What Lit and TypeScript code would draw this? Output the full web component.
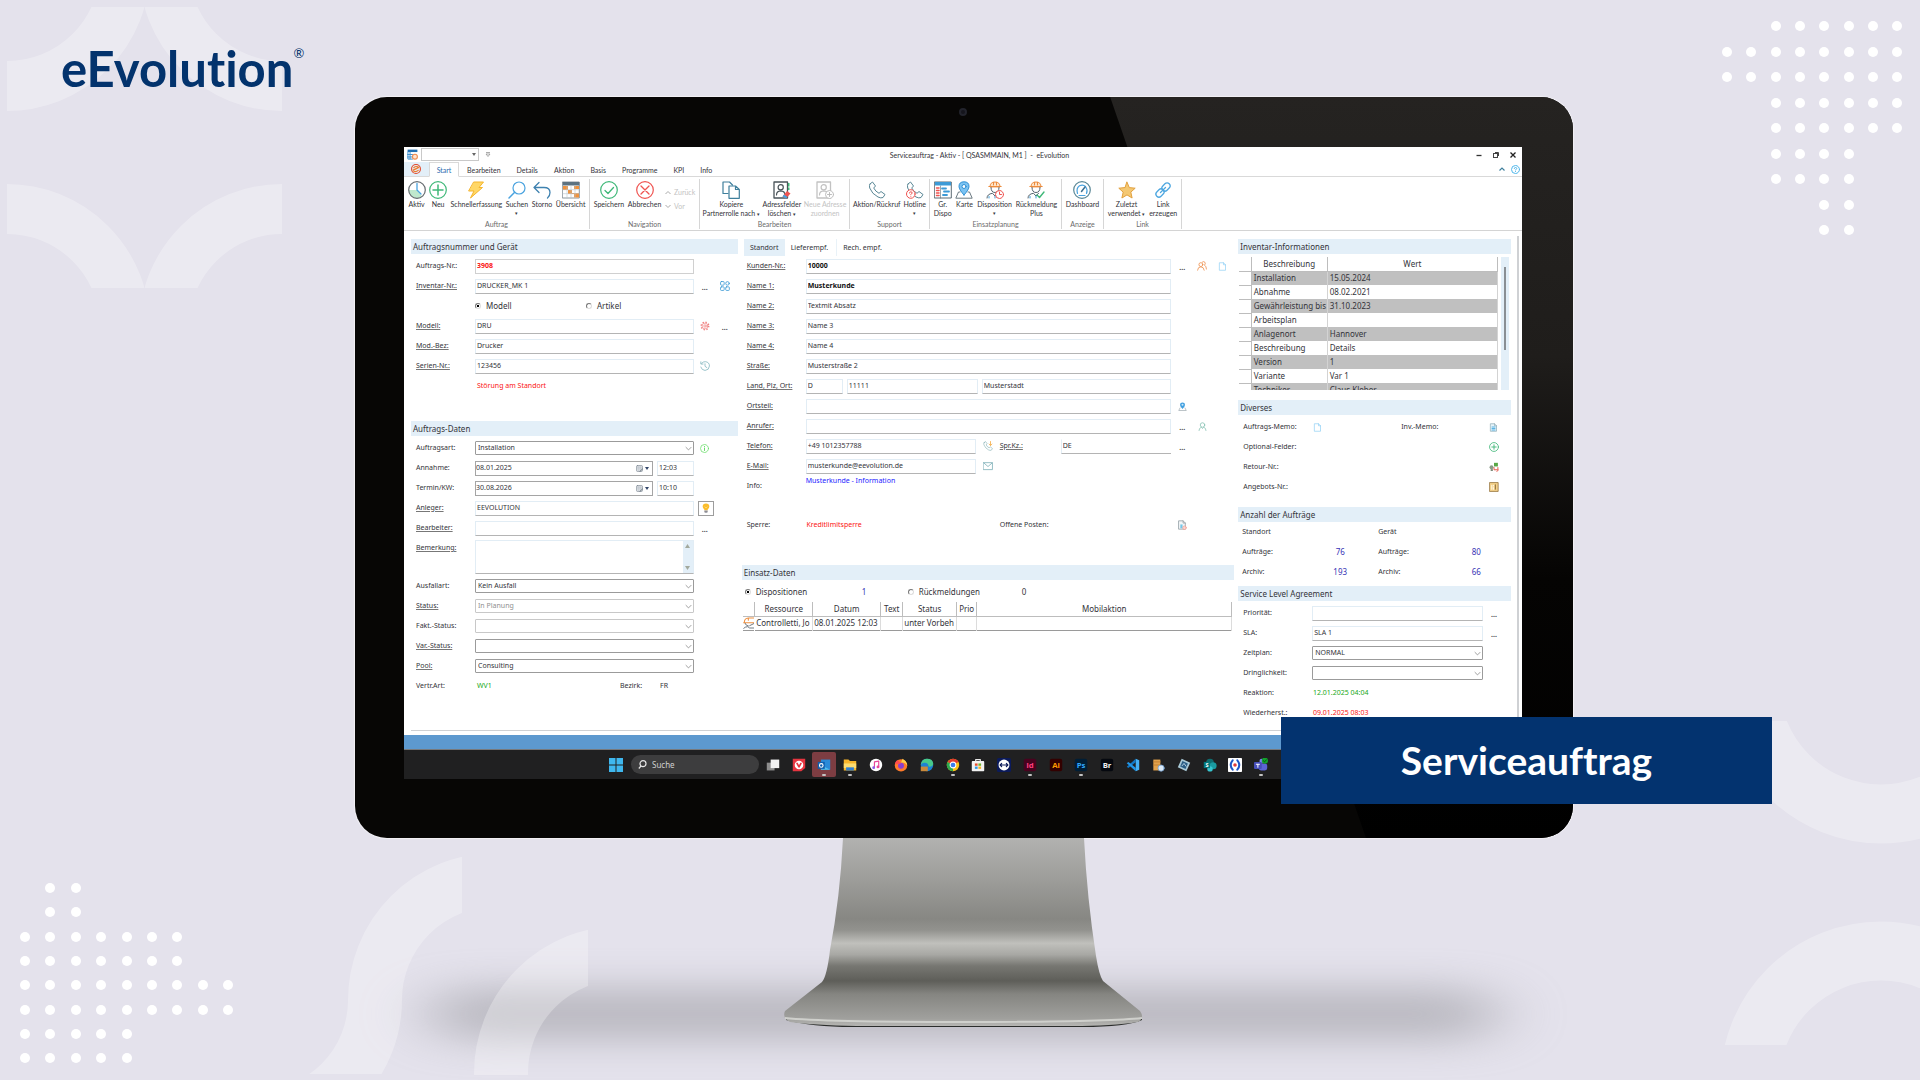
import { LitElement, html, svg, css, nothing, TemplateResult } from "lit";
import { customElement } from "lit/decorators.js";
import { classMap } from "lit/directives/class-map.js";

/* ---------- icon artwork ---------- */

const icon = (size: number, body: unknown, cls = "") => html`
  <svg class="ic ${cls}" width=${size} height=${size} viewBox="0 0 18 18" fill="none"
    stroke-linecap="round" stroke-linejoin="round" aria-hidden="true">${body}</svg>`;

const phone = (c: string) => svg`<path d="M2 3 L4.500 1 L7.500 5 L5.700 7 Q7.500 10.500 11 12.300 L13 10.500 L17 13.500 L15 16.500 Q13 17.500 10 16 Q4 13 1.700 7 Q1 4.500 2 3Z" stroke=${c}/>`;

const worker = svg`
  <path d="M4 5.500 Q4 1 9 1 Q14 1 14 5.500 Z" fill="#fde3c8" stroke="#ec8b3c"/>
  <path d="M2.800 5.500 H15.200 M7.500 1.300 V4 M10.500 1.300 V4" stroke="#ec8b3c"/>
  <path d="M5 6.500 Q5 11.500 9 11.500 Q13 11.500 13 6.500" stroke="#56646e"/>
  <path d="M1 17 Q1 13 6.500 12.300 L9 15 L11.500 12.300" stroke="#56646e"/>
  <path d="M3 17 V15.500 M9 15 V17" stroke="#3d9ad6"/>`;

const contact = (c: string) => svg`
  <rect x="1" y="1" width="13.500" height="16" stroke=${c} stroke-width="1.300"/>
  <circle cx="7.700" cy="6.300" r="2.600" stroke=${c} stroke-width="1.200"/>
  <path d="M3.500 14 Q3.500 10 7.700 9.800 Q12 10 12 14" stroke=${c} stroke-width="1.200"/>`;

const doc = (c: string, fill = "none") => svg`<path d="M3.500 1.500 H11 L15 5.500 V16.500 H3.500Z M11 1.500 V5.500 H15" stroke=${c} fill=${fill} stroke-width="1.400"/>`;

const I: Record<string, unknown> = {
  aktiv: svg`<path d="M1 9 L9 9 L14 15.500 Q9 19 4 15.500 Q1 13 1 9Z" fill="#bfe8cd"/><circle cx="9" cy="9" r="8.300" stroke="#666c70" stroke-width="1.200"/><path d="M9 2.500 V9 L13 13" stroke="#4aa3df" stroke-width="1.300"/>`,
  neu: svg`<circle cx="9" cy="9" r="8.300" stroke="#3fb878" stroke-width="1.200"/><path d="M9 4 V14 M4 9 H14" stroke="#3fb878" stroke-width="1.500"/>`,
  schnell: svg`<path d="M7 1 H16.500 L12 6.500 H15.500 L3.500 17 L7 10 H2 Z" fill="#ffd766" stroke="#f5b52c"/>`,
  suchen: svg`<circle cx="11" cy="7" r="6" stroke="#4aa3df" stroke-width="1.200"/><path d="M6.700 11.300 L1 17" stroke="#4aa3df" stroke-width="1.500"/>`,
  storno: svg`<path d="M6 1.500 L1 6.500 L6 11.500 M1 6.500 H11 Q17 6.500 17 11.500 Q17 15 14.500 17" stroke="#3f82b0" stroke-width="1.300"/>`,
  ueber: svg`<rect x=".700" y="1" width="16.600" height="16" fill="#fff" stroke="#8b959c"/><rect x=".700" y="1" width="16.600" height="3.500" fill="#5c7280"/><path d="M1 5 H6 V9 H10 V12 H17 V16.500 H12 V13 H6 V9 H1Z M12 5 H17 V8 H12Z" fill="#f0923c"/><path d="M1 8.700 H17 M1 12.700 H17 M5 4.500 V17 M9 4.500 V17 M13 4.500 V17" stroke="#b9c6cd" stroke-width=".600"/>`,
  speichern: svg`<circle cx="9" cy="9" r="8.300" stroke="#3fb878" stroke-width="1.200"/><path d="M5 9.500 L8 12.500 L13.500 6.500" stroke="#3fb878" stroke-width="1.300"/>`,
  abbrechen: svg`<circle cx="9" cy="9" r="8.300" stroke="#ef5350" stroke-width="1.200"/><path d="M5 5 L13 13 M13 5 L5 13" stroke="#ef5350" stroke-width="1.300"/>`,
  kopiere: svg`<path d="M6 12.500 H1 V1 H7.500 L10.500 4" stroke="#3f7f9c" stroke-width="1.200"/><path d="M7 5 H13.500 L17.300 8.500 V17.300 H7Z M13.500 5 V8.500 H17.300" stroke="#3f7f9c" stroke-width="1.200" fill="#fff"/>`,
  adresse: svg`${contact("#4a5459")}<path d="M15 2 H16.500 V5.500 H15Z M15 6.500 H16.500 V9 H15Z" fill="#3fb878"/><path d="M9.500 15.500 L14 10 L17.500 12.500 L13 17.500Z" fill="#ef5350"/><path d="M9.500 15.500 L11 13.500 L14.500 16 L13 17.500Z" fill="#4aa3df"/>`,
  neueadr: svg`${contact("#c2c2c2")}<circle cx="13.500" cy="13.500" r="4" fill="#fff" stroke="#bdbdbd"/><path d="M13.500 11.500 V15.500 M11.500 13.500 H15.500" stroke="#bdbdbd"/>`,
  phone: phone("#5a8796"),
  hotline: svg`${phone("#5a8796")}<circle cx="4.800" cy="13" r="4.300" fill="#fff" stroke="#ef5350"/><path d="M3.500 12 Q3.500 10.800 4.800 10.800 Q6.200 10.800 6.200 12 Q6.200 12.800 4.800 13.400 M4.800 15.200 V15.300" stroke="#ef5350"/>`,
  dispo: svg`<rect x=".700" y="1" width="16.600" height="16" stroke="#5d6b74"/><rect x="1" y="1" width="16" height="3.500" fill="#3d9ad6"/><path d="M2.500 7 H5 M2.500 9.500 H5 M2.500 12 H5 M2.500 14.500 H5" stroke="#ef5350" stroke-width="1.500"/><path d="M8 7.500 H12 M10 10.500 H15 M9 14 H13" stroke="#3d9ad6" stroke-width="1.800"/><path d="M6.500 5 V17" stroke="#5d6b74" stroke-width=".600"/>`,
  karte: svg`<path d="M5 11 H3.500 L.800 17.200 H17.200 L14.500 11 H13" stroke="#6c7a82"/><path d="M9 14 Q4 8.500 4 5.500 Q4 .800 9 .800 Q14 .800 14 5.500 Q14 8.500 9 14Z" fill="#7cc3f2" stroke="#2f8fd3"/><circle cx="9" cy="5.500" r="2" fill="#fff" stroke="#2f8fd3"/>`,
  disposition: svg`${worker}<circle cx="13.500" cy="13.500" r="4" fill="#fff" stroke="#ef5350"/><path d="M13.500 11 V13.500 H15.500" stroke="#ef5350"/>`,
  rueck: svg`${worker}<path d="M10 14 L12.500 16.500 L17 11" stroke="#3fb878" stroke-width="1.400"/>`,
  dash: svg`<circle cx="9" cy="9" r="8.300" stroke="#5a8796" stroke-width="1.200"/><path d="M4.500 12.500 Q3 7 6.500 4.800 Q10 3 12.500 5.500 Q15 9 13.500 12.500 M6 14.500 H12" stroke="#4aa3df" stroke-width="1.200"/><path d="M8.500 10.500 L12 6" stroke="#3d6f90" stroke-width="1.500"/>`,
  stern: svg`<path d="M9 1.200 L11.300 6.600 L17.200 7.200 L12.800 11.100 L14.100 17 L9 13.900 L3.900 17 L5.200 11.100 L.800 7.200 L6.700 6.600Z" fill="#f4c873" stroke="#e2a13f"/>`,
  link: svg`<rect x="9" y="1.500" width="6" height="9" rx="3" transform="rotate(45 12 6)" stroke="#4ea7e0" stroke-width="1.300"/><rect x="3" y="7.500" width="6" height="9" rx="3" transform="rotate(45 6 12)" stroke="#4ea7e0" stroke-width="1.300"/><path d="M6.500 11.500 L11.500 6.500" stroke="#4ea7e0" stroke-width="1.300"/>`,
  app: svg`<rect x="1" y="1" width="16" height="4" fill="#1f6fb2"/><path d="M1.500 5 V16.500 H9 M1 9 H9 M1 13 H9 M5 5 V16" stroke="#3d8fcf" stroke-width="1.600"/><circle cx="13" cy="12.500" r="4" fill="#ffe3cf" stroke="#ee8a4c" stroke-width="1.800"/>`,
  ee: svg`<circle cx="9" cy="9" r="8" stroke="#e1492c" stroke-width="2"/><path d="M4 11 L14 6 M5 13 Q9 15 13 11.500 M5 6.500 Q8 3.500 12.500 5" stroke="#ee7a2c" stroke-width="2.200"/>`,
  grid: svg`<g stroke="#3d9ad6" stroke-width="1.500"><rect x="1" y="1" width="6.500" height="6.500" rx="1.500"/><circle cx="13.500" cy="4.300" r="3.200"/><rect x="1" y="10.500" width="6.500" height="6.500" rx="1.500"/><rect x="10.300" y="10.500" width="6.500" height="6.500" rx="1.500"/></g>`,
  gear: svg`<circle cx="9" cy="9" r="6.800" stroke="#f07f7f" stroke-width="2.400" stroke-dasharray="2.500 2.840" stroke-linecap="butt"/><circle cx="9" cy="9" r="5.200" stroke="#f07f7f" stroke-width="1.200"/><circle cx="9" cy="9" r="2.200" stroke="#f07f7f" stroke-width="1.300"/>`,
  history: svg`<path d="M3 4 Q6 1 9.500 1.200 Q17 2 17 9 Q16.500 16.500 9 17 Q3 16.500 1.500 11 M1.500 1.500 V5.500 H5.500 M9 5 V9.500 L12.500 12" stroke="#7fb4bd" stroke-width="1.400"/>`,
  info: svg`<circle cx="9" cy="9" r="8" stroke="#67dd67" stroke-width="1.500"/><path d="M9 8 V13 M9 5 V5.200" stroke="#67dd67" stroke-width="2"/>`,
  bulb: svg`<path d="M9 1 Q15 1 15 6.500 Q15 9 12 11.500 V13 H6 V11.500 Q3 9 3 6.500 Q3 1 9 1Z" fill="#fbbd2b"/><path d="M7 7 L9 9 L11 7" stroke="#fde7a8"/><path d="M6 13.500 H12 V16.500 L10 17.500 H8 L6 16.500Z" fill="#8c8c94"/>`,
  people: svg`<g stroke="#ee9150" stroke-width="1.500"><circle cx="7" cy="6.500" r="3.500"/><path d="M1 16.500 Q1.500 10.500 7 10.500 Q12 10.500 13 16.500"/><path d="M9.500 2 Q12 0 14 2 Q16 5 13.500 7.500 Q17 9.500 17 14.500"/></g>`,
  sheet: doc("#8fd0f5"),
  sheetfull: svg`${doc("#8aa9b5", "#e6f4fb")}<path d="M6 8 H12 M6 11 H12 M6 14 H12" stroke="#5ab4e4" stroke-width="2"/>`,
  pin: svg`<path d="M4 12 L1.500 17 H16.500 L14 12" stroke="#98a4aa" stroke-width="1.300"/><path d="M9 14 Q4 9 4 5.500 Q4 1 9 1 Q14 1 14 5.500 Q14 9 9 14Z" fill="#3f9fe0"/><circle cx="9" cy="5.500" r="2" fill="#cfe9fa"/>`,
  person: svg`<g stroke="#83bfb0" stroke-width="1.500"><circle cx="9" cy="6" r="4.500"/><path d="M2 17 Q2 12 6.500 10.500 L9 13 L11.500 10.500 Q16 12 16 17"/></g>`,
  call: svg`${phone("#77a9ab")}<path d="M13.500 1 V8 M11 5.500 L13.500 8 L16 5.500" stroke="#f5b252" stroke-width="1.600"/>`,
  mail: svg`<rect x="1" y="3" width="16" height="12.500" stroke="#79acb5" stroke-width="1.400"/><path d="M1.500 3.500 L9 10 L16.500 3.500" stroke="#79acb5" stroke-width="1.400"/>`,
  posten: svg`${doc("#8f9ba1", "#f3f6f8")}<path d="M6 8 H10 V15 H6Z" fill="#74c7e8"/><circle cx="13.500" cy="14" r="3.300" fill="#fbd5d0" stroke="#f19084"/>`,
  plus: svg`<circle cx="9" cy="9" r="8" stroke="#45b97c" stroke-width="1.500"/><path d="M9 5 V13 M5 9 H13" stroke="#45b97c" stroke-width="1.700"/>`,
  retour: svg`<circle cx="4.500" cy="9.500" r="3.500" fill="#8a9a86"/><rect x="9" y="1.500" width="7" height="6.500" fill="#58a846"/><path d="M3 13 H7 V16 H3Z" fill="#6c7c67"/><path d="M9 10 V14 H16 V10 M14 17 L17 14.500" stroke="#e3594b" stroke-width="1.800"/>`,
  angebot: svg`<rect x="1.500" y="1" width="15" height="16" fill="#f3d089" stroke="#9b7a45" stroke-width="1.500"/><path d="M5 6 V13 M8 6 V7 M8 10 V13" stroke="#fff6de" stroke-width="2"/><path d="M11.500 5 V13" stroke="#7b5d2d" stroke-width="1.500"/>`,
  calendar: svg`<rect x="1.500" y="1.500" width="15" height="15" rx="2" fill="#e4e6ea" stroke="#7b8590" stroke-width="1.700"/><path d="M3 6 H15 M3 10 H15 M7 3 V15 M11 3 V15" stroke="#aab3bd"/><path d="M10 16.500 L16.500 10.500" stroke="#4d5966" stroke-width="2"/>`,
  helm: svg`<path d="M2 8 Q2 2 8 1.500 H16 M8 1.500 V5 M1 8.500 H16" stroke="#ee9040" stroke-width="1.600"/><path d="M3 9.500 Q4 13 8 13.500 M10 13 L16 10 M1 17 Q3 14.500 7 14.500 L10 16.500 H16" stroke="#5b6670" stroke-width="1.300"/>`,
};

/* ---------- ribbon description ---------- */

interface Tool { i: string; t: string; t2?: string; drop?: boolean; off?: boolean; }
interface Group { name: string; width: number; tools: Tool[]; nav?: boolean; }

const GROUPS: Group[] = [
  { name: "Auftrag", width: 186, tools: [
    { i: "aktiv", t: "Aktiv" }, { i: "neu", t: "Neu" }, { i: "schnell", t: "Schnellerfassung" },
    { i: "suchen", t: "Suchen", drop: true }, { i: "storno", t: "Storno" }, { i: "ueber", t: "Übersicht" } ] },
  { name: "Navigation", width: 110, nav: true, tools: [
    { i: "speichern", t: "Speichern" }, { i: "abbrechen", t: "Abbrechen" } ] },
  { name: "Bearbeiten", width: 150, tools: [
    { i: "kopiere", t: "Kopiere", t2: "Partnerrolle nach", drop: true },
    { i: "adresse", t: "Adressfelder", t2: "löschen", drop: true },
    { i: "neueadr", t: "Neue Adresse", t2: "zuordnen", off: true } ] },
  { name: "Support", width: 80, tools: [
    { i: "phone", t: "Aktion/Rückruf" }, { i: "hotline", t: "Hotline", drop: true } ] },
  { name: "Einsatzplanung", width: 132, tools: [
    { i: "dispo", t: "Gr.", t2: "Dispo" }, { i: "karte", t: "Karte" },
    { i: "disposition", t: "Disposition", drop: true }, { i: "rueck", t: "Rückmeldung", t2: "Plus" } ] },
  { name: "Anzeige", width: 42, tools: [{ i: "dash", t: "Dashboard" }] },
  { name: "Link", width: 78, tools: [
    { i: "stern", t: "Zuletzt", t2: "verwendet", drop: true }, { i: "link", t: "Link", t2: "erzeugen" } ] },
];

const INVENTORY: [string, string][] = [
  ["Installation", "15.05.2024"], ["Abnahme", "08.02.2021"], ["Gewährleistung bis", "31.10.2023"],
  ["Arbeitsplan", ""], ["Anlagenort", "Hannover"], ["Beschreibung", "Details"],
  ["Version", "1"], ["Variante", "Var 1"], ["Techniker", "Claus Kleber"],
];

/* ---------- taskbar artwork ---------- */

const tile = (bg: string, fg: string, t: string) => svg`
  <rect x="1" y="1" width="16" height="16" rx="2.500" fill=${bg}/>
  <text x="9" y="12.700" text-anchor="middle" font-size="10" font-weight="700" font-family="Open Sans, sans-serif" fill=${fg}>${t}</text>`;

const TASKS: { n: string; g: unknown; run?: boolean; hot?: boolean }[] = [
  { n: "Taskansicht", g: svg`<rect x="1" y="6" width="10" height="10" fill="#8d8d8d"/><rect x="6" y="2" width="11" height="11" fill="#f1f1f1"/>` },
  { n: "Vivaldi", g: svg`<path d="M1 1 H17 V13 L12 17 H1Z" fill="#e63540"/><circle cx="9" cy="9" r="5.500" fill="#fff"/><path d="M6.500 7 L9 11.500 L11.500 7" stroke="#e63540" stroke-width="2.200"/>` },
  { n: "Outlook", hot: true, run: true, g: svg`<path d="M5 2 H17 V15 H5Z" fill="#2a8ad8"/><path d="M5 9 L17 15 H5Z" fill="#50c0f0"/><rect x="1" y="5" width="9" height="9" fill="#0f5fae"/><circle cx="5.500" cy="9.500" r="2.300" stroke="#fff" stroke-width="1.400"/>` },
  { n: "Explorer", run: true, g: svg`<path d="M1 2 H7 L9 4 H17 V16 H1Z" fill="#f7b52c"/><path d="M1 7 H17 V13 H1Z" fill="#fddc70"/><path d="M4 16 V12 H14 V16" fill="#2f7fd0"/>` },
  { n: "iTunes", g: svg`<circle cx="9" cy="9" r="8" fill="#fff"/><path d="M7 12.500 V5 L12.500 4 V11.500" stroke="#e8489a" stroke-width="1.500"/><circle cx="6" cy="12.500" r="1.800" fill="#8a5be8"/><circle cx="11.500" cy="11.500" r="1.800" fill="#e8489a"/>` },
  { n: "Firefox", g: svg`<circle cx="9" cy="9.500" r="8" fill="#ff7a2a"/><path d="M11 1 Q17 4 17 10 Q14 5 9 6Z" fill="#ffd04a"/><circle cx="9" cy="10" r="3.800" fill="#8b3fd0"/><path d="M1.500 8 Q2 3 5 3 L9 7Z" fill="#ff4b50"/>` },
  { n: "Edge", g: svg`<circle cx="9" cy="9" r="8" fill="#1d82d2"/><path d="M1 9 Q2 1 9 1 Q17 1 17 8 Q16 12 11 11 Q11 6 6 6 Q2 6 1 9Z" fill="#48c98a"/><rect x="1" y="11" width="9" height="6" fill="#c98a3c"/>` },
  { n: "Chrome", run: true, g: svg`<circle cx="9" cy="9" r="8" fill="#fbc116"/><path d="M9 9 L2 5 Q5 1 9 1 Q14 1 16 5Z" fill="#e33b2e"/><path d="M9 9 L9 17 Q1 16 1 9 Q1 6.500 2 5Z" fill="#2da94f"/><circle cx="9" cy="9" r="3.700" fill="#3b7ded" stroke="#fff" stroke-width="1.300"/>` },
  { n: "Store", g: svg`<path d="M6 5 V2 H12 V5" stroke="#e8e8e8" stroke-width="1.500"/><rect x="1" y="4" width="16" height="13" rx="1" fill="#f2f2f2"/><path d="M5 7 H8.500 V10 H5Z" fill="#e8502f"/><path d="M9.500 7 H13 V10 H9.500Z" fill="#6fb52c"/><path d="M5 11 H8.500 V14 H5Z" fill="#2f9be8"/><path d="M9.500 11 H13 V14 H9.500Z" fill="#f5b52c"/>` },
  { n: "TeamViewer", g: svg`<rect width="18" height="18" rx="2" fill="#0b1a5a"/><circle cx="9" cy="9" r="7" fill="#fff"/><path d="M4 9 H14 M6 7 L4 9 L6 11 M12 7 L14 9 L12 11" stroke="#0b1a5a" stroke-width="1.500"/>` },
  { n: "InDesign", run: true, g: tile("#49021f", "#ff3f7f", "Id") },
  { n: "Illustrator", g: tile("#330000", "#ff9a00", "Ai") },
  { n: "Photoshop", run: true, g: tile("#001e36", "#31a8ff", "Ps") },
  { n: "Bridge", g: tile("#05080f", "#f0f0f0", "Br") },
  { n: "VS Code", g: svg`<path d="M12.500 1 V17 L17 15 V3Z" fill="#45b1f5"/><path d="M12.500 1 V5.500 L3 13 L1 11.300Z" fill="#1277c4"/><path d="M12.500 17 V12.500 L3 5 L1 6.700Z" fill="#2196e8"/>` },
  { n: "Verwaltung", g: svg`<path d="M3 2 H12 V16 H3Z" fill="#e3a24c"/><path d="M3 5 H12 M3 9 H12" stroke="#b9762a"/><circle cx="13" cy="13" r="4" fill="#dce9f5" stroke="#6f9fd0"/>` },
  { n: "Navigator", g: svg`<path d="M6 1 L17 6 L12 17 L1 12Z" fill="#a9c9d6"/><path d="M7 4 L14 7 L11 14 L4 11Z" fill="#2a5e86"/><path d="M6.500 10 L9 7 L11.500 10.500" stroke="#d8ecf6"/>` },
  { n: "SharePoint", g: svg`<circle cx="9" cy="6" r="5" fill="#0f6c70"/><circle cx="13" cy="10" r="4.500" fill="#1a9ba1"/><circle cx="9" cy="14" r="3.500" fill="#37c6d0"/><rect x="1" y="5" width="8" height="8" fill="#03787c"/><text x="5" y="11.500" text-anchor="middle" font-size="7" font-weight="700" font-family="Open Sans, sans-serif" fill="#fff">S</text>` },
  { n: "Fernwartung", g: svg`<rect width="18" height="18" rx="1" fill="#fff"/><path d="M6 3 Q1 9 6 15 M12 3 Q17 9 12 15" stroke="#1b55c8" stroke-width="2.600"/><circle cx="9" cy="9" r="2.300" fill="#e03b3b"/>` },
  { n: "Teams", run: true, g: svg`<circle cx="10" cy="4" r="3" fill="#7b83eb"/><rect x="6" y="7" width="11" height="9" rx="3" fill="#5b63d3"/><rect x="0" y="5" width="10" height="9" rx="1" fill="#464eb8"/><path d="M3 8 H7 M5 8 V12" stroke="#fff" stroke-width="1.300"/><circle cx="14" cy="3.500" r="4" fill="#12a12c"/><path d="M12 3.500 L13.500 5 L16 2.300" stroke="#043d0d"/>` },
];

/* ---------- background dots ---------- */

const dots = (x0: number, y0: number, dx: number, dy: number, rows: [number, number][]) =>
  rows.map(([a, b], r) => Array.from({ length: b - a + 1 }, (_, k) =>
    svg`<circle cx=${Math.round(x0 + (a + k) * dx)} cy=${Math.round(y0 + r * dy)} r="5"/>`));

const ring = (cx: number, cy: number, r: number, w: number, clip: string) =>
  svg`<circle cx=${cx} cy=${cy} r=${r} stroke-width=${w} clip-path="url(#${clip})"/>`;

@customElement("app-root")
export class AppRoot extends LitElement {
  static styles = css`
    :host { display: block; font-family: "Noto Sans", "Open Sans", sans-serif; font-size: 7px; line-height: 10px; color: #333339; }
    * { box-sizing: border-box; }
    svg { display: block; }
    button, input, select, textarea { font: inherit; color: inherit; margin: 0; padding: 0; border: 0; background: none; border-radius: 0; outline: 0; }
    .scene { position: relative; overflow: hidden; min-height: 100vh; background: #e4e2ec; display: grid; grid-template-columns: 355fr 1218fr 347fr; grid-template-rows: 97px auto 1fr; }
    .decor { position: absolute; inset: 0; width: 100%; height: 100%; }
    .logo { position: relative; grid-column: 1 / -1; margin: 0; padding: 38px 0 0 61px; display: flex; font: 700 49px/60px Lato, sans-serif; font-variant-ligatures: none; color: #03336d; }
    .reg { font-size: 13px; line-height: 30px; font-weight: 400; }

    .monitor { position: relative; grid-column: 2; padding: 50px 51px 59px 49px; border-radius: 32px; background: #070605; box-shadow: 0 0 1px 1px #f2f1f6; }
    .gloss { position: absolute; inset: 0; border-radius: 32px; background: linear-gradient(#252321, #1f1d1b 35%, #050403 65%, #000); clip-path: polygon(62% 0, 100% 0, 100% 100%, 83% 100%); }
    .camera { position: absolute; top: 11px; left: 50%; width: 8px; height: 8px; margin-left: -5px; border-radius: 4px; background: #15151c; border: 2px solid #22232c; }
    .screen { position: relative; background: #fff; display: flex; flex-direction: column; }
    .stand { position: relative; grid-column: 2; justify-self: center; width: 364px; }
    .banner { position: absolute; right: -199px; bottom: 34px; width: 491px; height: 87px; margin: 0; background: #03336f; color: #fff; font: 700 39px/86px Lato, sans-serif; font-variant-ligatures: none; text-align: center; }

    .chrome { font-family: Lato, "Noto Sans", sans-serif; }
    .titlebar { display: grid; grid-template-columns: 1fr auto 1fr; align-items: center; height: 15px; padding: 0 5px 0 3px; }
    .quick { display: flex; align-items: center; gap: 3px; }
    .quickwrap { display: grid; align-items: center; }
    .quickwrap > * { grid-area: 1 / 1; }
    .quickwrap svg { justify-self: end; margin-right: 3px; }
    .quickbox { width: 58px; height: 13px; border: 1px solid #c9c9c9; }
    .title { padding-left: 35px; white-space: pre; font-size: 7px; }
    .winbtns { display: flex; justify-content: flex-end; gap: 9px; }
    .tabs { display: flex; align-items: stretch; height: 15px; border-bottom: 1px solid #d9d9d9; }
    .filetab { width: 25px; background: #e3eff8; display: grid; place-items: center; padding-right: 2px; }
    .tab { height: 15px; padding: 0 8px; }
    .tab.active { border: 1px solid #d9d9d9; border-bottom-color: #fff; background: #fff; color: #2c6cb0; width: 30px; padding: 0; }
    .tabs .right { margin-left: auto; display: flex; align-items: center; gap: 5px; padding-right: 2px; }
    .ribbon { display: flex; height: 54px; border-bottom: 1px solid #d4d4d4; }
    .group { display: grid; grid-template-rows: 1fr 9px; margin: 2px 0 1px; border-right: 1px solid #d6d6d6; text-align: center; }
    .tools { display: flex; justify-content: space-evenly; align-items: flex-start; padding-top: 2px; }
    .tool { min-width: 18px; display: grid; justify-items: center; white-space: nowrap; line-height: 9px; }
    .tool .ic { margin-bottom: 1px; }
    .tool.off, .step { color: #c3c3c3; }
    .gname { color: #6b6b6b; line-height: 9px; }
    .steps { display: grid; gap: 4px; padding-top: 6px; }
    .step { display: flex; align-items: center; gap: 3px; line-height: 10px; }
    .drop { font-size: 5px; line-height: 8px; }

    .body { display: grid; grid-template-columns: 327fr 493fr 273fr; gap: 4px; padding: 8px 11px 4px 7px; min-height: 504px; position: relative; }
    .body::after { content: ""; position: absolute; right: 3px; top: 5px; bottom: 5px; width: 2px; background: #cfd1d4; }
    .body::before { content: ""; position: absolute; left: 7px; right: 3px; bottom: 4px; height: 1px; background: #cfd1d4; }
    .colm { display: flex; flex-direction: column; min-width: 0; }
    .head { margin: 0; height: 15px; background: #e3eff8; padding-left: 2px; font-size: 8px; font-weight: 400; line-height: 15px; }
    .rows { padding: 2px 0 0 5px; }
    .mid .rows { padding-top: 0; }
    .row { display: grid; grid-template-columns: 59px 1fr 44px; align-items: center; height: 20px; }
    .mid .row { grid-template-columns: 59px 1fr 63px; }
    .sla .row { grid-template-columns: 69px 1fr 28px; padding-left: 0; }
    .tall { height: 38px; }
    .tall > label { align-self: start; padding-top: 5px; }
    .u { text-decoration: underline; text-underline-offset: 1px; text-decoration-color: #777; }
    .fields { display: flex; align-items: center; gap: 4px; min-width: 0; }
    .fields > * { min-width: 0; }
    .in { width: 100%; height: 15px; padding: 0 0 1px 1px; border: 1px solid #e2edf5; border-bottom-color: #b4b4b4; }
    .in.first { border-color: #d0d0d0; }
    .bold { font-weight: 700; color: #111; }
    .red { color: #fb1414; }
    .green { color: #18a818; }
    .blue { color: #1d1dff; }
    .navy { color: #3733b5; font-size: 8px; }
    .sel { display: grid; width: 100%; align-items: center; }
    .sel > * { grid-area: 1 / 1; }
    .sel select { width: 100%; height: 14px; appearance: none; border: 1px solid #9b9b9b; border-radius: 1px; padding: 0 2px 1px; opacity: 1; }
    .sel select:disabled { border-color: #c8c8c8; color: #8f8f8f; }
    .sel .ic { justify-self: end; margin-right: 2px; pointer-events: none; }
    .date { display: flex; align-items: center; flex: 180 1 0; height: 15px; border: 1px solid #a5a5a5; padding-right: 3px; }
    .date input { flex: 1; min-width: 0; padding-bottom: 1px; }
    .date button { display: flex; align-items: center; gap: 2px; }
    .time { flex: 35 1 0; }
    .w35 { flex: 35 1 0; } .w131 { flex: 131 1 0; } .w191 { flex: 191 1 0; }
    .w170 { flex: 0 0 170px; } .icoslot { flex: 0 0 16px; display: grid; place-items: center; }
    .lab59 { flex: 0 0 57px; }
    .open { border-right: 0; border-top-color: #fff; }
    .area { display: grid; grid-template-columns: 1fr 10px; height: 34px; border: 1px solid #e2edf5; border-bottom-color: #b4b4b4; }
    .area textarea { resize: none; width: 100%; height: 100%; min-width: 0; }
    .areabar { background: #e3eff8; display: flex; flex-direction: column; justify-content: space-between; align-items: center; padding: 3px 0; }
    .extras { display: flex; padding-left: 1px; }
    .extras > * { width: 20px; display: grid; place-items: center; }
    .dots { font-weight: 700; line-height: 8px; padding-top: 4px; }
    .extras > .boxed { border: 1px solid #9d9d9d; width: 16px; height: 15px; margin-left: 3px; }
    .radio { display: flex; align-items: center; gap: 5px; font-size: 8px; }
    .radio input { appearance: none; width: 6px; height: 6px; border: 1px solid #777; border-radius: 3px; border-right-color: #ddd; border-bottom-color: #ddd; }
    .radio input:checked { background: radial-gradient(#000 45%, #fff 50%); }
    .pair { display: grid; grid-template-columns: 111px 1fr; }
    .vertr { display: grid; grid-template-columns: 143px 40px 1fr; padding-left: 2px; }
    .subtabs { display: flex; height: 17px; padding-left: 2px; }
    .subtab { padding: 0 6px; }
    .subtab.on { background: #e3eff8; padding: 0 4px; width: 41px; }
    .subtab + .subtab + .subtab { border-left: 1px solid #e9f2f8; margin-left: 2px; }
    .linktext { align-self: start; line-height: 10px; text-decoration: none; }
    .gap14 { height: 19px; }
    .gap30 { height: 30px; }
    .einsatz { display: grid; grid-template-columns: 113px 50px 112px 1fr; align-items: center; height: 22px; padding: 2px 0 0 3px; font-size: 8px; }
    table { border-collapse: collapse; table-layout: fixed; font-size: 8px; width: 100%; }
    th { font-weight: 400; padding: 0; height: 14px; line-height: 10px; border: 1px solid #bdbdbd; border-top: 0; }
    td { padding: 0 0 0 1px; height: 14px; line-height: 10px; white-space: nowrap; overflow: hidden; border-right: 1px solid #dcdcdc; }
    .jobs { margin: 0 2px 0 1px; width: auto; }
    .jobs table { border-bottom: 1px solid #9a9a9a; }
    .jobs th:first-child { border-left: 0; }
    .jobs td:first-child { padding: 0; border-right-color: #fff; }
    .j0 { width: 12px; } .j1 { width: 58px; } .j2 { width: 68px; } .j3 { width: 22px; } .j4 { width: 54px; } .j5 { width: 20px; }
    .inv { display: grid; grid-template-columns: 1fr 8px; gap: 3px; height: 133px; margin: 3px 2px 0 1px; overflow: hidden; }
    .inv th { border-top: 0; }
    .inv th:first-child { border-left: 0; }
    .inv td { border-right: 1px solid #d3d3d3; padding-left: 2px; }
    .inv td:first-child { border-bottom: 1px solid #bdbdbd; border-right: 1px solid #bdbdbd; }
    .inv tr.odd td:not(:first-child) { background: #c0c0c0; }
    .i0 { width: 12px; } .i1 { width: 76px; }
    .invbar { background: #e3eff8; display: flex; justify-content: center; padding-top: 10px; }
    .thumb { width: 2px; height: 83px; background: #8a8f94; }
    .misc { display: grid; grid-template-columns: 70px 88px 1fr 34px; align-items: center; height: 20px; }
    .misc .end { grid-column: 4; justify-self: center; }
    .count { display: grid; grid-template-columns: 84px 52px 84px 1fr; align-items: center; height: 20px; padding-left: 4px; }
    .count .navy { justify-self: start; width: 28px; text-align: center; }
    .g10 { margin-top: 10px; } .g7 { margin-top: 10px; } .g4 { margin-top: 4px; } .g24 { margin-top: 25px; }
    .status { height: 15px; background: #5d99cf; border-bottom: 1px solid #77797c; }
    .taskbar { height: 29px; background: #202021; display: flex; align-items: center; gap: 8px; padding-left: 205px; color: #d0d0d0; font-size: 8px; }
    .search { display: flex; align-items: center; gap: 5px; width: 128px; height: 19px; border-radius: 10px; background: #3d3d3e; padding-left: 7px; }
    .search input { width: 90px; }
    .search input::placeholder { color: #d0d0d0; opacity: 1; }
    .apps { display: grid; grid-template-columns: repeat(20, 1fr); width: 514px; margin-left: -7px; }
    .app { position: relative; display: grid; place-items: center; height: 25px; }
    .app.hot { background: #7d3d42; margin: 0 1px; border-radius: 2px; }
    .app.run::after { content: ""; position: absolute; bottom: 1px; left: 50%; width: 4px; height: 2px; margin-left: -2px; border-radius: 1px; background: #c3c3c3; }
  `;

  private chev = () => html`<svg class="ic" width="7" height="7" viewBox="0 0 10 10" fill="none" stroke="#777" aria-hidden="true"><path d="M1 3 L5 7 L9 3"/></svg>`;

  private more = (name: string) => html`<button class="dots" aria-label="${name} auswählen">...</button>`;

  private label = (id: string, text: string, u = true) =>
    html`<label for=${id} class=${classMap({ u })}>${text}</label>`;

  private input = (id: string, value = "", cls = "") => html`<input id=${id} class="in ${cls}" .value=${value}>`;

  private row(id: string, text: string, value: string, o: { u?: boolean; cls?: string; extras?: unknown } = {}) {
    return html`<div class="row">${this.label(id, text, o.u ?? true)}
      <div class="fields">${this.input(id, value, o.cls)}</div>
      <div class="extras">${o.extras ?? nothing}</div></div>`;
  }

  private select(id: string, text: string, value: string, o: { u?: boolean; off?: boolean; extras?: unknown } = {}) {
    return html`<div class="row">${this.label(id, text, o.u ?? false)}
      <div class="sel"><select id=${id} ?disabled=${!!o.off}><option>${value}</option></select>${this.chev()}</div>
      <div class="extras">${o.extras ?? nothing}</div></div>`;
  }

  private date(id: string, text: string, d: string, t: string) {
    return html`<div class="row">${this.label(id, text, false)}
      <div class="fields"><div class="date"><input id=${id} .value=${d}>
        <button aria-label="${text} Kalender">${icon(7, I.calendar)}<svg width="4" height="3" viewBox="0 0 4 3" aria-hidden="true"><path d="M0 0H4L2 3Z" fill="#34476a"/></svg></button></div>
        <input class="in time" aria-label="${text} Uhrzeit" .value=${t}></div></div>`;
  }

  private arrow = (d: string) => html`<svg width="5" height="4" viewBox="0 0 5 4" aria-hidden="true"><path d=${d} fill="#a3a99d"/></svg>`;

  private decor(): TemplateResult {
    return html`<svg class="decor" viewBox="0 0 1920 1080" preserveAspectRatio="xMidYMid slice" aria-hidden="true">
      <defs>
        <clipPath id="c1"><path d="M7 7H144.500V111H7Z M7 184H144.500V288H7Z"/></clipPath>
        <clipPath id="c2"><path d="M144.500 7H282V111H144.500Z M144.500 184H282V288H144.500Z"/></clipPath>
        <clipPath id="c3"><path d="M1700 721H1920V1045H1700Z"/></clipPath>
        <clipPath id="c4"><path d="M340 850H462V1000H340Z"/></clipPath>
        <clipPath id="c5"><path d="M300 1000H410V1074H300Z"/></clipPath>
        <clipPath id="c6"><path d="M470 900H588V1075H470Z"/></clipPath>
        <filter id="soft" x="-20%" y="-150%" width="140%" height="400%"><feGaussianBlur stdDeviation="34 18"/></filter>
      </defs>
      <rect x="430" y="988" width="1066" height="52" rx="26" fill="#8f8f94" opacity=".5" filter="url(#soft)"/>
      <g fill="none" stroke="#fff" stroke-opacity=".28">
        ${ring(7, -32, 118, 50, "c1")}${ring(7, 327, 118, 50, "c1")}
        ${ring(282, -32, 118, 50, "c2")}${ring(282, 327, 118, 50, "c2")}
        ${ring(1881, 683, 131, 59, "c3")}${ring(1881, 1082, 131, 59, "c3")}
        ${ring(495, 1000, 120, 54, "c4")}${ring(258, 1000, 117, 54, "c5")}${ring(621, 1073, 120, 54, "c6")}
      </g>
      <g fill="#fff">
        ${dots(1727, 26, 24.3, 25.5, [[2, 7], [0, 7], [0, 7], [2, 7], [2, 7], [2, 5], [2, 5], [4, 5], [4, 5]])}
        ${dots(25, 888, 25.4, 24.3, [[1, 2], [1, 2], [0, 6], [0, 6], [0, 8], [0, 8], [0, 4], [0, 4]])}
      </g></svg>`;
  }

  private tool(t: Tool) {
    return html`<button class="tool ${t.off ? "off" : ""}" ?disabled=${!!t.off}>${icon(18, I[t.i])}
      <span>${t.t}</span>
      ${t.t2 ? html`<span>${t.t2}${t.drop ? html` <span class="drop">▾</span>` : nothing}</span>`
        : t.drop ? html`<span class="drop">▾</span>` : nothing}</button>`;
  }

  private chromeBars() {
    return html`<header class="chrome">
      <div class="titlebar">
        <div class="quick">${icon(11, I.app)}
          <div class="quickwrap"><input class="quickbox" aria-label="Schnellsuche"><svg width="4" height="3" viewBox="0 0 4 3" aria-hidden="true"><path d="M0 0H4L2 3Z" fill="#666"/></svg></div>
          <svg width="10" height="5" viewBox="0 0 10 5" aria-hidden="true"><path d="M4 .500H8 M4 2H8L6 4.500Z" stroke="#888" stroke-width=".700" fill="none"/></svg></div>
        <div class="title">Serviceauftrag - Aktiv - [ QSASMMAIN, M1 ]  -  eEvolution</div>
        <div class="winbtns">
          <button aria-label="Minimieren"><svg width="8" height="8" viewBox="0 0 8 8"><path d="M1.500 4.500H6.500" stroke="#333" stroke-width="1.300"/></svg></button>
          <button aria-label="Wiederherstellen"><svg width="8" height="8" viewBox="0 0 8 8" fill="none" stroke="#444"><rect x="1.500" y="2.500" width="4" height="4"/><path d="M3 1.500H6.500V5"/></svg></button>
          <button aria-label="Schließen"><svg width="8" height="8" viewBox="0 0 8 8"><path d="M1.500 1.500L6.500 6.500M6.500 1.500L1.500 6.500" stroke="#222" stroke-width="1.300"/></svg></button>
        </div>
      </div>
      <nav class="tabs">
        <button class="filetab" aria-label="Datei">${icon(10, I.ee)}</button>
        <button class="tab active">Start</button>
        ${["Bearbeiten", "Details", "Aktion", "Basis", "Programme", "KPI", "Info"].map(t => html`<button class="tab">${t}</button>`)}
        <div class="right">
          <button aria-label="Menüband einklappen"><svg width="8" height="8" viewBox="0 0 8 8" fill="none"><path d="M1.500 5.500L4 3L6.500 5.500" stroke="#3f7f9c" stroke-width="1.200"/></svg></button>
          <button aria-label="Hilfe">${icon(9, svg`<circle cx="9" cy="9" r="8" stroke="#4fb6ea" stroke-width="2"/><path d="M6.500 7Q6.500 5 9 5Q11.500 5 11.500 7Q11.500 8.500 9 10M9 13V13.200" stroke="#4fb6ea" stroke-width="2"/>`)}</button>
        </div>
      </nav>
      <div class="ribbon">
        ${GROUPS.map(g => html`<section class="group" style="width:${g.width}px">
          <div class="tools">${g.tools.map(t => this.tool(t))}
            ${g.nav ? html`<div class="steps">
              <button class="step" disabled><svg width="6" height="5" viewBox="0 0 6 5" fill="none" stroke="#aaa"><path d="M.500 4L3 1.500L5.500 4"/></svg>Zurück</button>
              <button class="step" disabled><svg width="6" height="5" viewBox="0 0 6 5" fill="none" stroke="#aaa"><path d="M.500 1L3 3.500L5.500 1"/></svg>Vor</button></div>` : nothing}
          </div><div class="gname">${g.name}</div></section>`)}
      </div></header>`;
  }

  private leftColumn() {
    return html`<div class="colm">
      <h2 class="head">Auftragsnummer und Gerät</h2>
      <div class="rows">
        ${this.row("anr", "Auftrags-Nr.:", "3908", { u: false, cls: "bold red first" })}
        ${this.row("inv", "Inventar-Nr.:", "DRUCKER_MK 1", { extras: html`${this.more("Inventar")}<button aria-label="Struktur">${icon(10, I.grid)}</button>` })}
        <div class="row"><span></span><div class="pair">
          <label class="radio"><input type="radio" name="typ" checked>Modell</label>
          <label class="radio"><input type="radio" name="typ">Artikel</label></div></div>
        ${this.row("mod", "Modell:", "DRU", { extras: html`<button aria-label="Konfiguration">${icon(10, I.gear)}</button>${this.more("Modell")}` })}
        ${this.row("bez", "Mod.-Bez:", "Drucker")}
        ${this.row("ser", "Serien-Nr.:", "123456", { extras: html`<button aria-label="Historie">${icon(10, I.history)}</button>` })}
        <div class="row"><span></span><span class="red vertr">Störung am Standort</span></div>
      </div>
      <h2 class="head g24">Auftrags-Daten</h2>
      <div class="rows">
        ${this.select("art", "Auftragsart:", "Installation", { extras: html`<button aria-label="Info">${icon(9, I.info)}</button>` })}
        ${this.date("ann", "Annahme:", "08.01.2025", "12:03")}
        ${this.date("ter", "Termin/KW:", "30.08.2026", "10:10")}
        ${this.row("anl", "Anleger:", "EEVOLUTION", { extras: html`<button class="boxed" aria-label="Hinweis">${icon(10, I.bulb)}</button>` })}
        ${this.row("bea", "Bearbeiter:", "", { extras: this.more("Bearbeiter") })}
        <div class="row tall">${this.label("bem", "Bemerkung:")}
          <div class="area"><textarea id="bem"></textarea><div class="areabar">${this.arrow("M0 4L2.500 0L5 4Z")}${this.arrow("M0 0L2.500 4L5 0Z")}</div></div></div>
        ${this.select("aus", "Ausfallart:", "Kein Ausfall")}
        ${this.select("sta", "Status:", "In Planung", { u: true, off: true })}
        ${this.select("fak", "Fakt.-Status:", "", { off: true })}
        ${this.select("vst", "Var.-Status:", "", { u: true })}
        ${this.select("poo", "Pool:", "Consulting", { u: true })}
        <div class="row"><span>Vertr.Art:</span><div class="vertr"><span class="green">WV1</span><span>Bezirk:</span><span>FR</span></div></div>
      </div></div>`;
  }

  private midColumn() {
    return html`<div class="colm mid">
      <div class="subtabs"><button class="subtab on">Standort</button><button class="subtab">Lieferempf.</button><button class="subtab">Rech. empf.</button></div>
      <div class="rows">
        ${this.row("kun", "Kunden-Nr.:", "10000", { cls: "bold", extras: html`${this.more("Kunde")}<button aria-label="Ansprechpartner">${icon(10, I.people)}</button><button aria-label="Memo">${icon(9, I.sheet)}</button>` })}
        ${this.row("n1", "Name 1:", "Musterkunde", { cls: "bold" })}
        ${this.row("n2", "Name 2:", "Textmit Absatz")}
        ${this.row("n3", "Name 3:", "Name 3")}
        ${this.row("n4", "Name 4:", "Name 4")}
        ${this.row("str", "Straße:", "Musterstraße 2")}
        <div class="row">${this.label("lan", "Land, Plz, Ort:")}
          <div class="fields">${this.input("lan", "D", "w35")}<input class="in w131" aria-label="Plz" .value=${"11111"}><input class="in w191" aria-label="Ort" .value=${"Musterstadt"}></div></div>
        ${this.row("ort", "Ortsteil:", "", { extras: html`<button aria-label="Karte">${icon(9, I.pin)}</button>` })}
        ${this.row("anf", "Anrufer:", "", { extras: html`${this.more("Anrufer")}<button aria-label="Kontakt">${icon(9, I.person)}</button>` })}
        <div class="row">${this.label("tel", "Telefon:")}
          <div class="fields">${this.input("tel", "+49 1012357788", "w170")}<button class="icoslot" aria-label="Anrufen">${icon(10, I.call)}</button>
            <label for="spr" class="u lab59">Spr.Kz.:</label>${this.input("spr", "DE", "open")}</div>
          <div class="extras">${this.more("Sprache")}</div></div>
        <div class="row">${this.label("mai", "E-Mail:")}
          <div class="fields">${this.input("mai", "musterkunde@eevolution.de", "w170")}<button class="icoslot" aria-label="E-Mail senden">${icon(10, I.mail)}</button></div></div>
        <div class="row"><span>Info:</span><a class="blue linktext" href="#info">Musterkunde - Information</a></div>
        <div class="gap14"></div>
        <div class="row"><span>Sperre:</span>
          <div class="fields"><span class="red w170">&#8202;Kreditlimitsperre</span><span class="icoslot"></span><span>Offene Posten:</span></div>
          <div class="extras"><button aria-label="Offene Posten">${icon(10, I.posten)}</button></div></div>
        <div class="gap30"></div>
      </div>
      <h2 class="head">Einsatz-Daten</h2>
      <div class="einsatz">
        <label class="radio"><input type="radio" name="ein" checked>Dispositionen</label><span class="navy">&nbsp; 1</span>
        <label class="radio"><input type="radio" name="ein">Rückmeldungen</label><span>&nbsp;0</span></div>
      <div class="jobs"><table>
        <colgroup><col class="j0"><col class="j1"><col class="j2"><col class="j3"><col class="j4"><col class="j5"><col></colgroup>
        <thead><tr><th></th><th>Ressource</th><th>Datum</th><th>Text</th><th>Status</th><th>Prio</th><th>Mobilaktion</th></tr></thead>
        <tbody><tr><td>${icon(12, I.helm)}</td><td>Controlletti, Jo</td><td>08.01.2025 12:03</td><td></td><td>unter Vorbeh</td><td></td><td></td></tr></tbody>
      </table></div></div>`;
  }

  private rightColumn() {
    return html`<div class="colm">
      <h2 class="head">Inventar-Informationen</h2>
      <div class="inv"><table>
        <colgroup><col class="i0"><col class="i1"><col></colgroup>
        <thead><tr><th></th><th>Beschreibung</th><th>Wert</th></tr></thead>
        <tbody>${INVENTORY.map(([a, b], i) => html`<tr class=${i % 2 ? "" : "odd"}><td></td><td>${a}</td><td>${b}</td></tr>`)}</tbody>
      </table><div class="invbar"><div class="thumb"></div></div></div>
      <h2 class="head g10">Diverses</h2>
      <div class="rows">
        <div class="misc"><span>Auftrags-Memo:</span><button aria-label="Auftrags-Memo">${icon(9, I.sheet)}</button><span>Inv.-Memo:</span><button class="end" aria-label="Inv.-Memo">${icon(9, I.sheetfull)}</button></div>
        <div class="misc"><span>Optional-Felder:</span><button class="end" aria-label="Optional-Felder">${icon(10, I.plus)}</button></div>
        <div class="misc"><span>Retour-Nr.:</span><button class="end" aria-label="Retour">${icon(10, I.retour)}</button></div>
        <div class="misc"><span>Angebots-Nr.:</span><button class="end" aria-label="Angebot">${icon(10, I.angebot)}</button></div>
      </div>
      <h2 class="head g7">Anzahl der Aufträge</h2>
      <div class="count"><span>Standort</span><span></span><span>Gerät</span></div>
      <div class="count"><span>Aufträge:</span><span class="navy">76</span><span>Aufträge:</span><span class="navy">80</span></div>
      <div class="count"><span>Archiv:</span><span class="navy">193</span><span>Archiv:</span><span class="navy">66</span></div>
      <h2 class="head g4">Service Level Agreement</h2>
      <div class="rows sla">
        ${this.row("pri", "Priorität:", "", { u: false, extras: this.more("Priorität") })}
        ${this.row("sla", "SLA:", "SLA 1", { u: false, extras: this.more("SLA") })}
        ${this.select("zei", "Zeitplan:", "NORMAL")}
        ${this.select("dri", "Dringlichkeit:", "")}
        <div class="row"><span>Reaktion:</span><span class="green">&#8202;12.01.2025 04:04</span></div>
        <div class="row"><span>Wiederherst.:</span><span class="red">&#8202;09.01.2025 08:03</span></div>
      </div></div>`;
  }

  private taskbar() {
    return html`<footer class="taskbar">
      <button aria-label="Start"><svg width="14" height="14" viewBox="0 0 14 14"><path d="M0 0H6.500V6.500H0ZM7.500 0H14V6.500H7.500ZM0 7.500H6.500V14H0ZM7.500 7.500H14V14H7.500Z" fill="#3fb7ee"/></svg></button>
      <div class="search"><svg width="9" height="9" viewBox="0 0 9 9" fill="none" stroke="#e6e6e6" stroke-width="1.200"><circle cx="5" cy="3.700" r="3"/><path d="M3 6L.800 8.500"/></svg>
        <input aria-label="Suche" placeholder="Suche"></div>
      <div class="apps">${TASKS.map(t => html`<button class=${classMap({ app: true, run: !!t.run, hot: !!t.hot })} aria-label=${t.n}>${icon(14, t.g)}</button>`)}</div>
    </footer>`;
  }

  render() {
    return html`<main class="scene">
      ${this.decor()}
      <h1 class="logo"><span>eEvolution</span><span class="reg">®</span></h1>
      <div class="monitor">
        <div class="gloss"></div><div class="camera"></div>
        <div class="screen">
          ${this.chromeBars()}
          <div class="body">${this.leftColumn()}${this.midColumn()}${this.rightColumn()}</div>
          <div class="status"></div>
          ${this.taskbar()}
        </div>
        <p class="banner">Serviceauftrag</p>
      </div>
      <svg class="stand" viewBox="0 0 364 192" aria-hidden="true">
        <defs>
          <linearGradient id="neck" x1="0" y1="0" x2="0" y2="1">
            <stop offset="0" stop-color="#b2b2b0"/><stop offset=".200" stop-color="#9f9f9c"/><stop offset=".430" stop-color="#878783"/>
            <stop offset=".490" stop-color="#92928e"/><stop offset=".560" stop-color="#c0c0bc"/><stop offset=".620" stop-color="#a8a8a4"/>
            <stop offset=".680" stop-color="#777772"/><stop offset=".760" stop-color="#5e5e59"/><stop offset=".830" stop-color="#858581"/>
            <stop offset=".960" stop-color="#a0a09d"/><stop offset="1" stop-color="#b6b6b3"/>
          </linearGradient>
        </defs>
        <path d="M4 182 Q30 189 70 189 H300 Q345 189 360 182 V178 H4Z" fill="#2b2d2c"/>
        <path d="M61 0 H302 Q305 60 314 118 Q317 137 321 143 L358 173 Q363 180 356 184 Q330 188 290 188 H75 Q30 187 8 184 Q0 180 3 173 L40 144 Q45 138 48 112 Q58 60 61 0Z" fill="url(#neck)"/>
        <path d="M3 180 Q40 184 182 184 Q325 184 360 180" stroke="#cfd0cc" stroke-width="2" fill="none"/>
      </svg>
    </main>`;
  }
}
